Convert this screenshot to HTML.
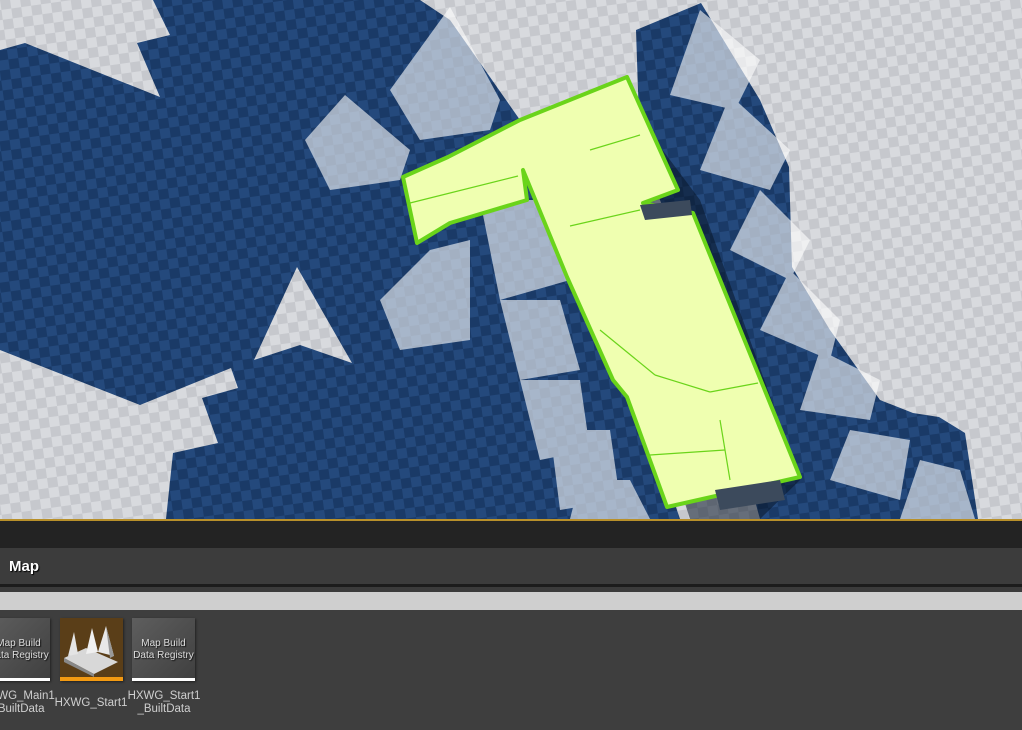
<!DOCTYPE html>
<html><head><meta charset="utf-8"><style>
body{margin:0;width:1022px;height:730px;overflow:hidden;background:#3d3d3d;font-family:"Liberation Sans",sans-serif;position:relative}
#vp{position:absolute;left:0;top:0;width:1022px;height:519px}
.bar1{position:absolute;left:0;top:519px;width:1022px;height:2px;background:#b8902a}
.bar2{position:absolute;left:0;top:521px;width:1022px;height:27px;background:#232323}
.hdr{position:absolute;left:0;top:548px;width:1022px;height:36px;background:#3c3c3c;color:#fff;font-weight:bold;font-size:15px;line-height:37px;text-indent:9px;text-shadow:1px 1px 1px #000}
.ln{position:absolute;left:0;top:584px;width:1022px;height:3px;background:#1c1c1c}
.g{position:absolute;left:0;top:587px;width:1022px;height:5px;background:#3b3b3b}
.lb{position:absolute;left:0;top:592px;width:1022px;height:18px;background:#cfcfcf}
.content{position:absolute;left:0;top:610px;width:1022px;height:120px;background:#3e3e3e}
.tile{position:absolute;top:618px;width:63px;height:63px;background:linear-gradient(135deg,#5e5e5e,#3f3f3f);box-shadow:1px 1px 2px #222}
.tile .b{position:absolute;left:0;bottom:0;width:100%;height:3px;background:#fff}
.tile .t{position:absolute;left:0;top:20px;width:100%;text-align:center;color:#ddd;font-size:10px;line-height:12px;text-shadow:1px 1px 1px #111}
.lab{position:absolute;top:690px;color:#cfcfcf;font-size:11.5px;line-height:13px;text-align:center;width:80px}
</style></head><body>
<svg id="vp" width="1022" height="519" viewBox="0 0 1022 519">
<defs>
<pattern id="pl" width="20" height="20" patternUnits="userSpaceOnUse" patternTransform="rotate(-8)">
<rect width="20" height="20" fill="#d8dade"/><rect width="10" height="10" fill="#c6c8cd"/><rect x="10" y="10" width="10" height="10" fill="#c6c8cd"/></pattern>
<pattern id="pb" width="20" height="20" patternUnits="userSpaceOnUse" patternTransform="rotate(-8)">
<rect width="20" height="20" fill="#24497c"/><rect width="10" height="10" fill="#1a3a67"/><rect x="10" y="10" width="10" height="10" fill="#1a3a67"/></pattern>
</defs>
<rect width="1022" height="519" fill="url(#pl)"/>
<polygon fill="url(#pb)" points="0,50 25,43 160,97 137,43 170,35 153,0 420,0 450,20 520,120 560,200 600,300 640,400 680,519 166,519 173,453 218,443 202,398 238,388 231,368 140,405 0,350"/>
<polygon fill="url(#pl)" points="254,360 297,267 352,363 300,345"/>
<polygon fill="url(#pb)" points="636,30 701,3 760,100 789,167 792,267 830,330 880,400 913,413 939,417 965,433 978,519 760,519 700,300 640,150"/>
<polygon fill="#0a1628" opacity="0.55" points="640,120 700,200 800,480 760,519 690,519 620,300"/>
<g fill="#ffffff" opacity="0.6">
<polygon points="450,7 500,100 490,130 420,140 390,90"/>
<polygon points="345,95 410,150 400,180 330,190 305,140"/>
<polygon points="700,10 760,60 735,110 670,95"/>
<polygon points="730,95 790,150 770,190 700,170"/>
<polygon points="760,190 810,240 790,280 730,250"/>
<polygon points="790,270 840,320 830,360 760,330"/>
<polygon points="820,350 880,380 870,420 800,410"/>
<polygon points="850,430 910,440 900,500 830,480"/>
<polygon points="920,460 960,470 975,519 900,519"/>
<polygon points="430,250 470,240 470,340 400,350 380,300"/>
<polygon points="480,200 560,200 570,280 500,300"/>
<polygon points="500,300 560,300 580,370 520,380"/>
<polygon points="520,380 580,380 590,450 540,460"/>
<polygon points="550,430 610,430 620,500 560,510"/>
<polygon points="580,480 630,480 650,519 570,519"/>
</g>
<polygon fill="#efffb0" stroke="#6ad41a" stroke-width="4" stroke-linejoin="round" points="403,177 448,157 520,120 627,77 678,190 643,203 693,213 800,477 667,507 627,397 613,380 567,277 523,170 527,200 450,223 417,243"/>
<g stroke="#6ad41a" stroke-width="1.2" fill="none">
<line x1="410" y1="203" x2="518" y2="176"/><line x1="570" y1="226" x2="640" y2="210"/>
<line x1="590" y1="150" x2="640" y2="135"/><line x1="655" y1="375" x2="710" y2="392"/>
<line x1="710" y1="392" x2="758" y2="383"/><line x1="720" y1="420" x2="730" y2="480"/>
<line x1="650" y1="455" x2="725" y2="450"/><line x1="600" y1="330" x2="655" y2="375"/>
</g>
<polygon fill="#3c4a5c" points="715,490 780,480 785,500 720,510"/>
<polygon fill="#3c4a5c" points="640,205 690,200 692,215 645,220"/>
</svg>
<div class="bar1"></div><div class="bar2"></div>
<div class="hdr">Map</div>
<div class="ln"></div><div class="g"></div><div class="lb"></div>
<div class="content"></div>
<div class="tile" style="left:-13px"><div class="t">Map Build<br>Data Registry</div><div class="b"></div></div>
<div class="tile" style="left:60px;background:#5a3e18">
<svg width="63" height="60" viewBox="0 0 63 60"><polygon points="4,40 26,30 58,44 34,56" fill="#d8d8d8"/><polygon points="4,40 34,56 34,59 4,44" fill="#888"/><polygon points="8,38 14,14 18,36" fill="#e4e4e4"/><polygon points="26,36 32,10 38,34" fill="#f0f0f0"/><polygon points="38,34 46,8 54,38" fill="#e8e8e8"/><polygon points="46,8 54,38 50,40" fill="#999"/></svg>
<div class="b" style="background:#f39a12;height:4px"></div></div>
<div class="tile" style="left:132px"><div class="t">Map Build<br>Data Registry</div><div class="b"></div></div>
<div class="lab" style="left:-22px">HXWG_Main1<br>_BuiltData</div>
<div class="lab" style="left:51px;top:697px">HXWG_Start1</div>
<div class="lab" style="left:124px">HXWG_Start1<br>_BuiltData</div>
</body></html>
